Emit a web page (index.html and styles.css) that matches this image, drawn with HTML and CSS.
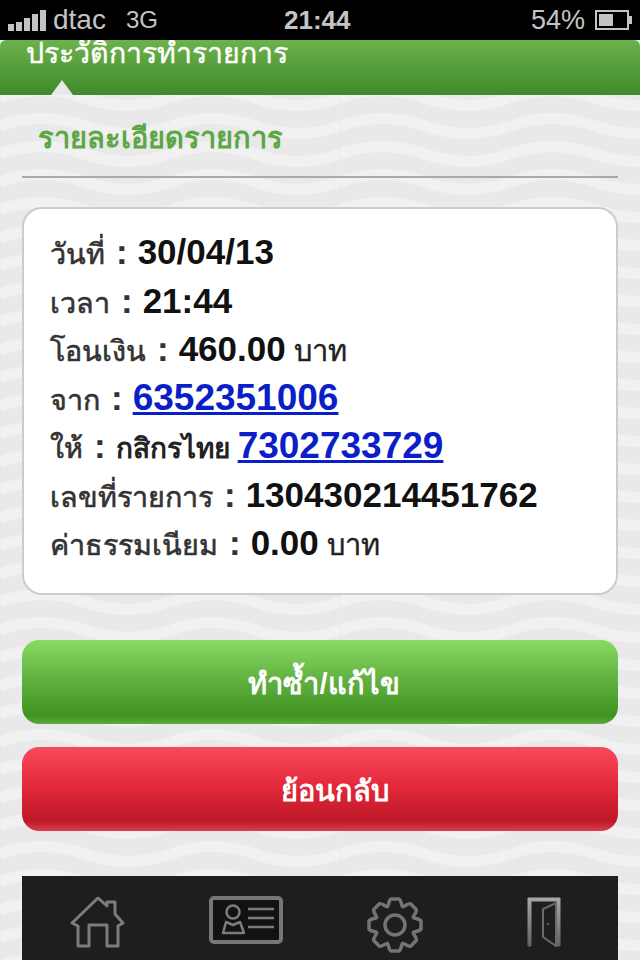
FILE: index.html
```html
<!DOCTYPE html>
<html lang="th">
<head>
    <meta charset="UTF-8">
    <meta name="viewport" content="width=device-width, initial-scale=1.0">
    <title>รายละเอียดรายการ</title>
    <link rel="stylesheet" href="styles.css">
</head>
<body>
    <div class="status-bar">
        <div class="status-left">
            <span class="signal"><i class="s1"></i><i class="s2"></i><i class="s3"></i><i class="s4"></i><i class="s5"></i></span>
            <span>dtac</span>
            <span class="network">3G</span>
        </div>
        <div class="status-time">21:44</div>
        <div class="status-right">
            <span>54%</span>
            <span class="battery"><span class="battery-level"></span></span>
            <span class="battery-tip"></span>
        </div>
    </div>

    <header class="page-header">
        <h1>ประวัติการทำรายการ</h1>
        <span class="notch"></span>
    </header>

    <main class="content">
        <h2 class="section-title">รายละเอียดรายการ</h2>

        <div class="detail-card">
            <p class="row"><span class="label">วันที่</span><span class="colon">:</span><b>30/04/13</b></p>
            <p class="row"><span class="label">เวลา</span><span class="colon">:</span><b>21:44</b></p>
            <p class="row"><span class="label">โอนเงิน</span><span class="colon">:</span><b>460.00</b> <span class="unit">บาท</span></p>
            <p class="row"><span class="label">จาก</span><span class="colon">:</span><a href="#">6352351006</a></p>
            <p class="row"><span class="label">ให้</span><span class="colon">:</span><span class="bank">กสิกรไทย</span> <a href="#">7302733729</a></p>
            <p class="row"><span class="label">เลขที่รายการ</span><span class="colon">:</span><b>130430214451762</b></p>
            <p class="row"><span class="label">ค่าธรรมเนียม</span><span class="colon">:</span><b>0.00</b> <span class="unit">บาท</span></p>
        </div>

        <button class="btn btn-green">ทำซ้ำ/แก้ไข</button>
        <button class="btn btn-red">ย้อนกลับ</button>

        <nav class="bottom-nav">
            <svg class="nav-icon" width="56" height="54" viewBox="0 0 56 54">
                <path d="M3 28 L29 3 L38 11 V7 H46 V19 L54 28 L49 31 V51 H38 V30 H20 V51 H9 V31 Z" fill="none" stroke="#7c7c7c" stroke-width="3" stroke-linejoin="round"/>
            </svg>
            <svg class="nav-icon" width="76" height="50" viewBox="0 0 76 50">
                <rect x="3" y="3" width="70" height="44" rx="3" fill="#121212" stroke="#767676" stroke-width="4"/>
                <circle cx="25" cy="17" r="6.5" fill="none" stroke="#7c7c7c" stroke-width="2.5"/>
                <path d="M15 38 L18 27 L25 30 L32 27 L36 38 Z" fill="none" stroke="#7c7c7c" stroke-width="2.5" stroke-linejoin="round"/>
                <path d="M40 14 H66 M40 23 H66 M40 32 H66" stroke="#7c7c7c" stroke-width="2.5"/>
            </svg>
            <svg class="nav-icon" width="58" height="60" viewBox="-29 -30 58 60">
                <defs>
                    <path id="gear-tooth" d="M-7.6-18.4 C-6-20-6.5-25-4-26 H4 C6.5-25 6-20 7.6-18.4"/>
                    <linearGradient id="door-frame" x1="0" y1="0" x2="0" y2="1">
                        <stop offset="0" stop-color="#a8a8a8"/>
                        <stop offset="1" stop-color="#626262"/>
                    </linearGradient>
                </defs>
                <g fill="none" stroke="#747474" stroke-width="3.5" stroke-linecap="round">
                    <use href="#gear-tooth"/>
                    <use href="#gear-tooth" transform="rotate(45)"/>
                    <use href="#gear-tooth" transform="rotate(90)"/>
                    <use href="#gear-tooth" transform="rotate(135)"/>
                    <use href="#gear-tooth" transform="rotate(180)"/>
                    <use href="#gear-tooth" transform="rotate(225)"/>
                    <use href="#gear-tooth" transform="rotate(270)"/>
                    <use href="#gear-tooth" transform="rotate(315)"/>
                    <circle r="10"/>
                </g>
            </svg>
            <svg class="nav-icon" width="40" height="52" viewBox="0 0 40 52">
                <path d="M4 51 V3 H36 V51 H33 V6 H7 V51 Z" fill="url(#door-frame)" stroke="url(#door-frame)" stroke-width="1"/>
                <path d="M19 14 L32 8 V51 L19 42 Z" fill="none" stroke="#6a6a6a" stroke-width="2"/>
                <circle cx="24" cy="29" r="1" fill="#777"/>
            </svg>
        </nav>
    </main>
</body>
</html>
```

FILE: styles.css
```css
* { box-sizing: border-box; }
html, body { height: 960px; overflow: hidden; }
body { margin: 0; font-family: "Liberation Sans", "Noto Sans", "DejaVu Sans", sans-serif; background-color: #e9e9e9; background-image: url("data:image/svg+xml,%3Csvg xmlns='http://www.w3.org/2000/svg' width='170' height='28'%3E%3Cpath d='M0 14 C28 4 56 4 85 14 S142 24 170 14' fill='none' stroke='%23f1f1f1' stroke-width='11'/%3E%3C/svg%3E"); }

.status-bar { height: 40px; background: #000; color: #c4c4c4; font-size: 28px; display: flex; justify-content: space-between; align-items: center; position: relative; padding: 0 8px 0 8px; }
.status-left { display: flex; align-items: center; gap: 7px; }
.signal { display: flex; align-items: flex-end; gap: 2px; height: 21px; }
.signal i { display: block; width: 6px; background: #c4c4c4; }
.s1 { height: 7px; } .s2 { height: 9px; } .s3 { height: 13px; } .s4 { height: 17px; } .s5 { height: 21px; }
.network { font-size: 24px; margin-left: 13px; }
.status-time { position: absolute; left: 284px; top: 5px; font-size: 26px; font-weight: bold; }
.status-right { display: flex; align-items: center; font-size: 27px; }
.battery { width: 34px; height: 20px; border: 2px solid #c4c4c4; margin-left: 10px; padding: 2px; display: block; }
.battery-level { display: block; width: 55%; height: 100%; background: #c4c4c4; }
.battery-tip { width: 3px; height: 8px; background: #c4c4c4; }

.page-header { height: 55px; background: linear-gradient(#6db24a, #3f8a2c); border-radius: 6px 6px 0 0; padding-left: 26px; position: relative; overflow: hidden; }
.page-header h1 { margin: -2px 0 0; font-size: 28.5px; line-height: 30px; font-weight: normal; color: #fff; -webkit-text-stroke: 0.4px #fff; }
.notch { position: absolute; left: 51px; bottom: 0; border-left: 11px solid transparent; border-right: 11px solid transparent; border-bottom: 15px solid #e9e9e9; }

.content { padding: 0 22px; }
.section-title { margin: 0; height: 83px; padding: 25px 0 0 16px; border-bottom: 2px solid #aaa; font-size: 29px; line-height: 36px; color: #5ba745; }

.detail-card { margin-top: 29px; height: 388px; padding: 19px 26px; background: #fff; border: 2px solid #ccc; border-radius: 20px; }
.row { margin: 0; height: 48.5px; line-height: 48px; font-size: 28.7px; color: #333; white-space: nowrap; }
.label { -webkit-text-stroke: 0.6px #333; }
.colon { font-size: 35px; font-weight: bold; margin: 0 10px 0 11px; }
.row b { font-size: 35px; color: #111; }
.row a { font-size: 37px; font-weight: bold; color: #0a1fc8; }
.unit { font-size: 29px; color: #222; -webkit-text-stroke: 0.4px #222; }
.bank { font-size: 28px; font-weight: bold; color: #222; }

.btn { display: block; width: 100%; height: 84px; border: none; border-radius: 17px; font-family: inherit; font-size: 29px; font-weight: bold; color: #fff; padding-top: 4px; }
.btn-green { margin-top: 45px; padding-left: 14px; background: linear-gradient(#88da63, #63b342 45%, #3f9221 90%, #58ab3c); }
.btn-red { margin-top: 23px; padding-left: 36px; background: linear-gradient(#f74a5a, #e5293c 45%, #bd1826 88%, #d8404d); }

.bottom-nav { margin-top: 45px; height: 90px; background: #1e1e1e; display: grid; grid-template-columns: repeat(4, 1fr); justify-items: center; align-items: start; padding-top: 19px; }
.nav-icon { display: block; }
```
